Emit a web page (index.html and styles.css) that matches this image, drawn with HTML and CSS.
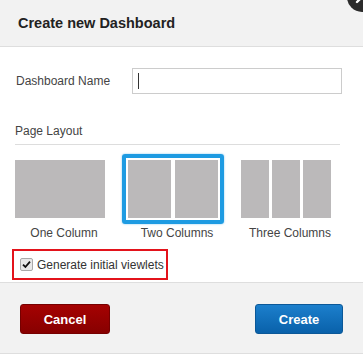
FILE: index.html
```html
<!DOCTYPE html>
<html lang="en">
<head>
    <meta charset="UTF-8">
    <title>Create new Dashboard</title>
    <link rel="stylesheet" href="styles.css">
</head>
<body>
<div class="dialog">
    <div class="dialog-header">
        <h3>Create new Dashboard</h3>
        <span class="close-btn">
            <svg width="30" height="30" viewBox="0 0 30 30">
                <circle cx="15" cy="15" r="15" fill="#2b2b2b"/>
                <path d="M10 10 L20 20 M20 10 L10 20" stroke="#fff" stroke-width="2.4" stroke-linecap="round"/>
            </svg>
        </span>
    </div>

    <div class="dialog-body">
        <div class="field-row">
            <label class="field-label">Dashboard Name</label>
            <div class="name-input"><span class="caret"></span></div>
        </div>

        <div class="section-title">Page Layout</div>

        <div class="layouts">
            <div class="layout-option">
                <div class="preview">
                    <div class="panel"></div>
                </div>
                <div class="layout-name">One Column</div>
            </div>
            <div class="layout-option">
                <div class="preview selected">
                    <div class="panel"></div>
                    <div class="panel"></div>
                </div>
                <div class="layout-name">Two Columns</div>
            </div>
            <div class="layout-option">
                <div class="preview three">
                    <div class="panel"></div>
                    <div class="panel"></div>
                    <div class="panel"></div>
                </div>
                <div class="layout-name">Three Columns</div>
            </div>
        </div>

        <div class="generate-box">
            <span class="check">
                <svg width="9" height="9" viewBox="0 0 9 9">
                    <path d="M1 4.6 L3.4 7 L8 1.6" fill="none" stroke="#111" stroke-width="1.8"/>
                </svg>
            </span>
            <span class="check-label">Generate initial viewlets</span>
        </div>
    </div>

    <div class="dialog-footer">
        <button class="btn btn-cancel">Cancel</button>
        <button class="btn btn-create">Create</button>
    </div>
</div>
</body>
</html>
```

FILE: styles.css
```css
body {
    margin: 0;
    background-color: #fff;
    font-family: "Liberation Sans", Arial, sans-serif;
    color: #333;
}

.dialog {
    position: relative;
    width: 363px;
    height: 356px;
    overflow: hidden;
}

.dialog-header {
    height: 46px;
    background-color: #f2f2f2;
    border-bottom: 1px solid #dedede;
    display: flex;
    align-items: center;
    padding-left: 18px;
}

.dialog-header h3 {
    margin: 0;
    font-size: 14.5px;
    font-weight: bold;
    color: #222;
}

.close-btn {
    position: absolute;
    top: -18px;
    left: 347px;
}

.dialog-body {
    padding: 21px 21px 0 15px;
}

.field-row {
    display: flex;
    align-items: center;
}

.field-label {
    width: 118px;
    padding-left: 1px;
    font-size: 12px;
    color: #444;
}

.name-input {
    width: 207px;
    height: 24px;
    border: 1px solid #ccc;
    display: flex;
    align-items: center;
    padding-left: 5px;
}

.caret {
    width: 1px;
    height: 16px;
    background-color: #333;
}

.section-title {
    margin-top: 30px;
    font-size: 12px;
    line-height: 14px;
    color: #444;
    padding-bottom: 6px;
    border-bottom: 1px solid #ddd;
    width: 325px;
}

.layouts {
    display: flex;
    gap: 11px;
    margin-top: 9px;
    margin-left: -6px;
}

.preview {
    display: flex;
    gap: 4px;
    width: 90px;
    height: 58px;
    padding: 2px;
    border: 4px solid transparent;
    border-radius: 3px;
}

.preview.selected {
    border-color: #1e9be2;
    box-shadow: 0 0 2px rgba(30, 155, 226, 0.6);
}

.preview.three {
    gap: 2.5px;
}

.panel {
    flex: 1;
    background-color: #bbb9ba;
}

.layout-name {
    margin-top: 2px;
    padding-left: 8px;
    text-align: center;
    font-size: 12px;
    line-height: 14px;
    color: #444;
}

.generate-box {
    display: flex;
    align-items: center;
    gap: 4px;
    width: 146px;
    height: 27px;
    margin-top: 9px;
    margin-left: -3px;
    padding-left: 6px;
    border: 2px solid #e3131b;
}

.check {
    width: 11px;
    height: 11px;
    border: 1px solid #a9a9a9;
    border-radius: 2px;
    background-color: #e8e8e8;
    display: flex;
    align-items: center;
    justify-content: center;
}

.check-label {
    font-size: 12px;
    color: #333;
}

.dialog-footer {
    margin-top: 2px;
    height: 72px;
    background-color: #f2f2f2;
    border-top: 1px solid #dedede;
    border-bottom: 1px solid #dedede;
    display: flex;
    justify-content: space-between;
    align-items: flex-start;
    padding: 21px 20px 0 20px;
    box-sizing: border-box;
}

.btn {
    height: 30px;
    border-radius: 3px;
    font-family: "Liberation Sans", Arial, sans-serif;
    font-size: 13px;
    font-weight: bold;
    color: #fff;
    cursor: pointer;
}

.btn-cancel {
    width: 90px;
    background: linear-gradient(#a50202, #870000);
    border: 1px solid #760000;
}

.btn-create {
    width: 88px;
    background: linear-gradient(#1c7fcc, #0961aa);
    border: 1px solid #0b5898;
}
```
